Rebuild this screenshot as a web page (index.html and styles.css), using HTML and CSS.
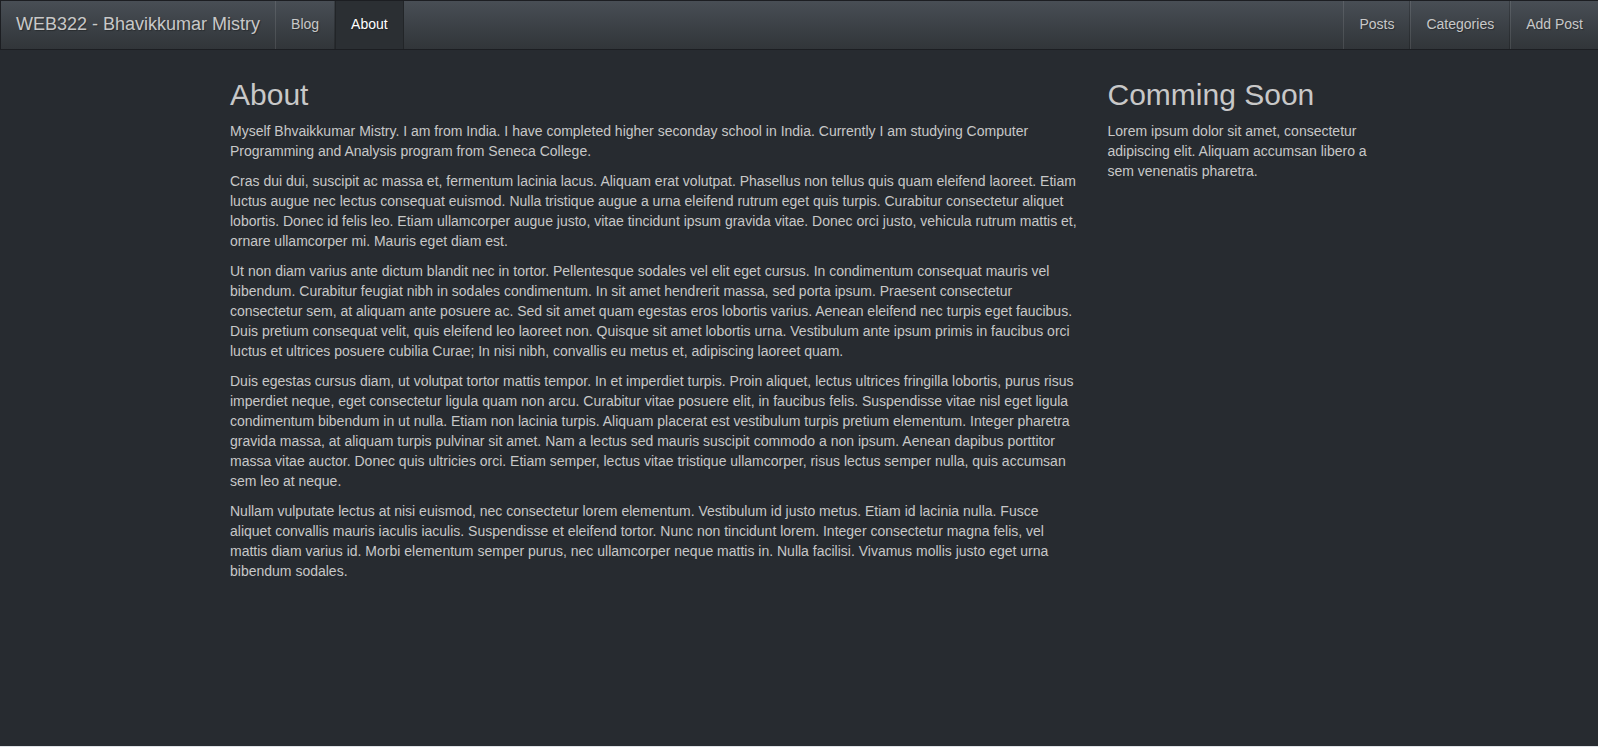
FILE: index.html
```
<!DOCTYPE html>
<html lang="en">
<head>
<meta charset="utf-8">
<title>WEB322 - About</title>
<link rel="stylesheet" href="styles.css">
</head>
<body>
<nav class="navbar">
  <div class="nav-left">
    <a class="brand" href="#">WEB322 - Bhavikkumar Mistry</a>
    <ul class="nav">
      <li><a href="#">Blog</a></li>
      <li class="active"><a href="#">About</a></li>
    </ul>
  </div>
  <ul class="nav nav-right">
    <li><a href="#">Posts</a></li>
    <li><a href="#">Categories</a></li>
    <li><a href="#">Add Post</a></li>
  </ul>
</nav>
<div class="container">
  <div class="row">
    <div class="col-main">
      <h2>About</h2>
      <p>Myself Bhvaikkumar Mistry. I am from India. I have completed higher seconday school in India. Currently I am studying Computer Programming and Analysis program from Seneca College.</p>
      <p>Cras dui dui, suscipit ac massa et, fermentum lacinia lacus. Aliquam erat volutpat. Phasellus non tellus quis quam eleifend laoreet. Etiam luctus augue nec lectus consequat euismod. Nulla tristique augue a urna eleifend rutrum eget quis turpis. Curabitur consectetur aliquet lobortis. Donec id felis leo. Etiam ullamcorper augue justo, vitae tincidunt ipsum gravida vitae. Donec orci justo, vehicula rutrum mattis et, ornare ullamcorper mi. Mauris eget diam est.</p>
      <p>Ut non diam varius ante dictum blandit nec in tortor. Pellentesque sodales vel elit eget cursus. In condimentum consequat mauris vel bibendum. Curabitur feugiat nibh in sodales condimentum. In sit amet hendrerit massa, sed porta ipsum. Praesent consectetur consectetur sem, at aliquam ante posuere ac. Sed sit amet quam egestas eros lobortis varius. Aenean eleifend nec turpis eget faucibus. Duis pretium consequat velit, quis eleifend leo laoreet non. Quisque sit amet lobortis urna. Vestibulum ante ipsum primis in faucibus orci luctus et ultrices posuere cubilia Curae; In nisi nibh, convallis eu metus et, adipiscing laoreet quam.</p>
      <p>Duis egestas cursus diam, ut volutpat tortor mattis tempor. In et imperdiet turpis. Proin aliquet, lectus ultrices fringilla lobortis, purus risus imperdiet neque, eget consectetur ligula quam non arcu. Curabitur vitae posuere elit, in faucibus felis. Suspendisse vitae nisl eget ligula condimentum bibendum in ut nulla. Etiam non lacinia turpis. Aliquam placerat est vestibulum turpis pretium elementum. Integer pharetra gravida massa, at aliquam turpis pulvinar sit amet. Nam a lectus sed mauris suscipit commodo a non ipsum. Aenean dapibus porttitor massa vitae auctor. Donec quis ultricies orci. Etiam semper, lectus vitae tristique ullamcorper, risus lectus semper nulla, quis accumsan sem leo at neque.</p>
      <p>Nullam vulputate lectus at nisi euismod, nec consectetur lorem elementum. Vestibulum id justo metus. Etiam id lacinia nulla. Fusce aliquet convallis mauris iaculis iaculis. Suspendisse et eleifend tortor. Nunc non tincidunt lorem. Integer consectetur magna felis, vel mattis diam varius id. Morbi elementum semper purus, nec ullamcorper neque mattis in. Nulla facilisi. Vivamus mollis justo eget urna bibendum sodales.</p>
    </div>
    <div class="col-side">
      <h2>Comming Soon</h2>
      <p>Lorem ipsum dolor sit amet, consectetur adipiscing elit. Aliquam accumsan libero a sem venenatis pharetra.</p>
    </div>
  </div>
</div>
</body>
</html>
```
FILE: styles.css
```
html, body {
  margin: 0;
  padding: 0;
}
body {
  background: #272b30;
  color: #c8c8c8;
  font-family: "Liberation Sans", Arial, Helvetica, sans-serif;
  font-size: 14px;
  line-height: 20px;
  min-height: 746px;
  border-bottom: 1px solid #dfe3e7;
}
.navbar {
  display: flex;
  justify-content: space-between;
  height: 50px;
  box-sizing: border-box;
  border: 1px solid #1c1e22;
  border-right: none;
  background-image: linear-gradient(#484e55, #3a3f44 60%, #313539);
}
.nav-left {
  display: flex;
}
.brand {
  display: block;
  padding: 0 15px;
  height: 48px;
  line-height: 46px;
  font-size: 18px;
  color: #c8c8c8;
  text-decoration: none;
  text-shadow: 1px 1px 1px rgba(0, 0, 0, 0.3);
}
.nav {
  display: flex;
  list-style: none;
  margin: 0;
  padding: 0;
}
.nav li a {
  display: block;
  height: 48px;
  line-height: 47px;
  padding: 0 15px;
  color: #c8c8c8;
  text-decoration: none;
  text-shadow: 1px 1px 1px rgba(0, 0, 0, 0.3);
  border-left: 1px solid rgba(255, 255, 255, 0.1);
  border-right: 1px solid rgba(0, 0, 0, 0.2);
}
.nav-right li:last-child a {
  border-right: none;
}
.nav li.active a {
  color: #fff;
  background: #2b2f33;
  border-left-color: rgba(0, 0, 0, 0.2);
}
.container {
  width: 1170px;
  margin: 0 auto;
  padding-top: 8px;
  padding-left: 2px;
}
.row {
  display: flex;
}
.col-main {
  width: 877.5px;
  padding: 0 15px;
  box-sizing: border-box;
}
.col-side {
  width: 292.5px;
  padding: 0 15px;
  box-sizing: border-box;
}
h2 {
  font-size: 30px;
  font-weight: 500;
  line-height: 33px;
  margin: 20px 0 10px;
  color: #c8c8c8;
}
p {
  margin: 0 0 10px;
}
```
